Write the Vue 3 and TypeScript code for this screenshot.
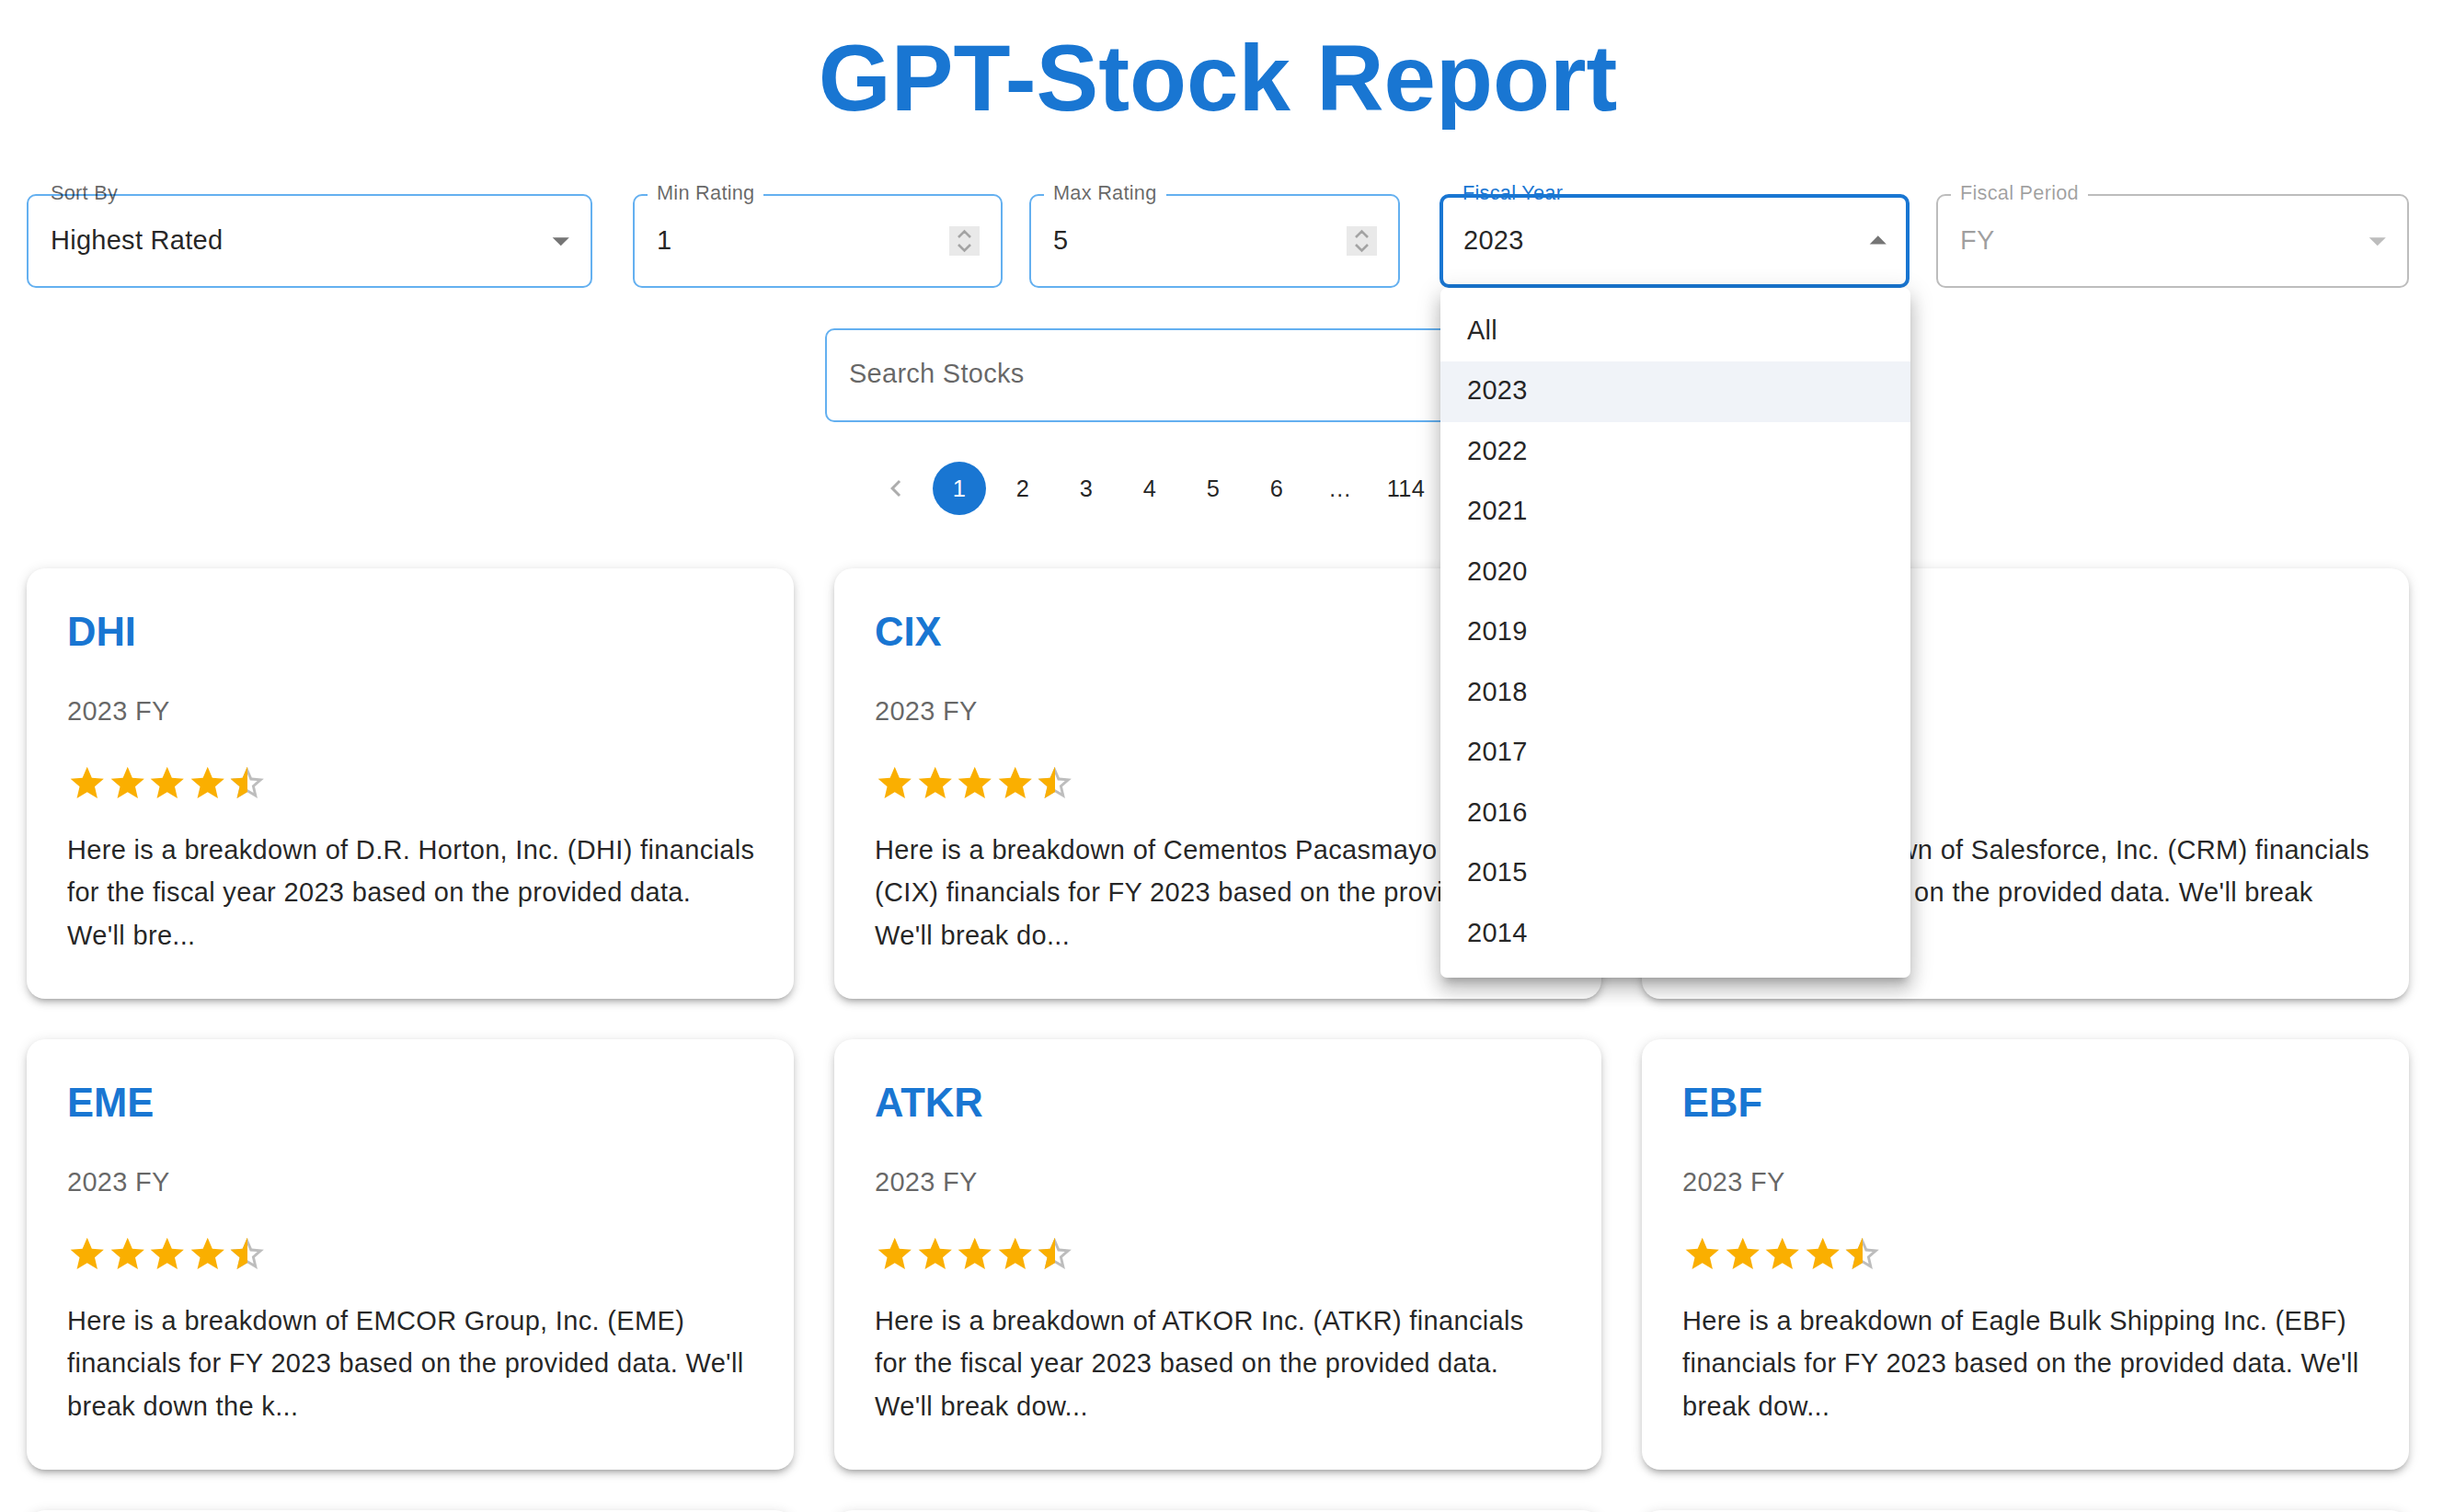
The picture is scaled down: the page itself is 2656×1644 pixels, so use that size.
<template>
  <div class="page">
    <h1 class="title">GPT-Stock Report</h1>

    <div class="filters">
      <div class="field sort">
        <label class="plain">Sort By</label>
        <span class="value">Highest Rated</span>
        <svg class="caret" viewBox="0 0 24 24"><path d="M7 10l5 5 5-5z" /></svg>
      </div>
      <div class="field rating">
        <label>Min Rating</label>
        <span class="value">1</span>
        <div class="spin">
          <svg viewBox="0 0 33 32"><path d="M10 12l6.5-6.5L23 12M10 20l6.5 6.5L23 20" /></svg>
        </div>
      </div>
      <div class="field rating max">
        <label>Max Rating</label>
        <span class="value">5</span>
        <div class="spin">
          <svg viewBox="0 0 33 32"><path d="M10 12l6.5-6.5L23 12M10 20l6.5 6.5L23 20" /></svg>
        </div>
      </div>
      <div class="field year focused">
        <label class="plain">Fiscal Year</label>
        <span class="value">2023</span>
        <svg class="caret" viewBox="0 0 24 24"><path d="M7 14l5-5 5 5z" /></svg>
        <ul class="menu">
          <li v-for="y in years" :key="y" :class="{ selected: y === '2023' }">{{ y }}</li>
        </ul>
      </div>
      <div class="field period disabled">
        <label>Fiscal Period</label>
        <span class="value">FY</span>
        <svg class="caret" viewBox="0 0 24 24"><path d="M7 10l5 5 5-5z" /></svg>
      </div>
    </div>

    <div class="search-row">
      <div class="field search">
        <span class="value placeholder">Search Stocks</span>
      </div>
    </div>

    <nav class="pagination">
      <button class="page-btn arrow" disabled>
        <svg viewBox="0 0 24 24"><path d="M15.41 7.41 14 6l-6 6 6 6 1.41-1.41L10.83 12z" /></svg>
      </button>
      <button v-for="p in pages" :key="p" class="page-btn" :class="{ active: p === '1' }">{{ p }}</button>
      <button class="page-btn arrow">
        <svg viewBox="0 0 24 24"><path d="M10 6 8.59 7.41 13.17 12l-4.58 4.59L10 18l6-6z" /></svg>
      </button>
    </nav>

    <div class="cards">
      <article v-for="c in cards" :key="c.ticker" class="card">
        <h2>{{ c.ticker }}</h2>
        <p class="period-text">2023 FY</p>
        <div class="stars">
          <svg v-for="n in 4" :key="n" viewBox="0 0 24 24"><path class="on" :d="starPath" /></svg>
          <span class="half">
            <svg viewBox="0 0 24 24"><path class="off" :d="starBorderPath" /></svg>
            <span class="half-fill"><svg viewBox="0 0 24 24"><path class="on" :d="starPath" /></svg></span>
          </span>
        </div>
        <p class="summary">{{ c.text }}</p>
      </article>
    </div>
  </div>
</template>

<script setup lang="ts">
interface StockCard {
  ticker: string
  text: string
}

const starPath = 'M12 17.27L18.18 21l-1.64-7.03L22 9.24l-7.19-.61L12 2 9.19 8.63 2 9.24l5.46 4.73L5.82 21z'
const starBorderPath = 'M22 9.24l-7.19-.62L12 2 9.19 8.63 2 9.24l5.46 4.73L5.82 21 12 17.27 18.18 21l-1.63-7.03L22 9.24zM12 15.4l-3.76 2.27 1-4.28-3.32-2.88 4.38-.38L12 6.1l1.71 4.04 4.38.38-3.32 2.88 1 4.28L12 15.4z'

const years: string[] = ['All', '2023', '2022', '2021', '2020', '2019', '2018', '2017', '2016', '2015', '2014']
const pages: string[] = ['1', '2', '3', '4', '5', '6', '…', '114']

const cards: StockCard[] = [
  { ticker: 'DHI', text: "Here is a breakdown of D.R. Horton, Inc. (DHI) financials for the fiscal year 2023 based on the provided data. We'll bre..." },
  { ticker: 'CIX', text: "Here is a breakdown of Cementos Pacasmayo S.A.A. (CIX) financials for FY 2023 based on the provided data. We'll break do..." },
  { ticker: 'CRM', text: "Here is a breakdown of Salesforce, Inc. (CRM) financials for FY 2023 based on the provided data. We'll break down..." },
  { ticker: 'EME', text: "Here is a breakdown of EMCOR Group, Inc. (EME) financials for FY 2023 based on the provided data. We'll break down the k..." },
  { ticker: 'ATKR', text: "Here is a breakdown of ATKOR Inc. (ATKR) financials for the fiscal year 2023 based on the provided data. We'll break dow..." },
  { ticker: 'EBF', text: "Here is a breakdown of Eagle Bulk Shipping Inc. (EBF) financials for FY 2023 based on the provided data. We'll break dow..." },
  { ticker: 'PHM', text: 'Here is a breakdown of PulteGroup, Inc. (PHM) financials for FY 2023.' },
  { ticker: 'NVR', text: 'Here is a breakdown of NVR, Inc. (NVR) financials for FY 2023.' },
  { ticker: 'LEN', text: 'Here is a breakdown of Lennar Corporation (LEN) financials for FY 2023.' }
]
</script>

<style scoped>
.page {
  height: 1644px;
  overflow: hidden;
  padding: 0 37px 0 29px;
  box-sizing: border-box;
  background: #fff;
  font-family: "Liberation Sans", Arial, sans-serif;
  color: rgba(0, 0, 0, 0.87);
}

.title {
  margin: 0;
  padding-top: 25px;
  height: 211px;
  box-sizing: border-box;
  text-align: center;
  font-size: 101.5px;
  line-height: 120px;
  font-weight: 700;
  color: #1976d2;
}

.filters {
  display: flex;
  gap: 29px;
}

.field {
  position: relative;
  height: 102px;
  box-sizing: border-box;
  border: 2px solid #64b0f0;
  border-radius: 10px;
  display: flex;
  align-items: center;
  padding: 0 24px;
  flex: none;
}

.sort { width: 615px; margin-right: 15px; }
.rating { width: 402px; }
.max { width: 403px; margin-right: 14px; }
.year { width: 511px; }
.period { width: 514px; }

.value {
  font-size: 29px;
  letter-spacing: 0.27px;
  margin-top: -2px;
}

.field label {
  position: absolute;
  left: 14px;
  top: -15px;
  padding: 0 10px;
  background: #fff;
  font-size: 21.75px;
  line-height: 24px;
  letter-spacing: 0.25px;
  color: rgba(0, 0, 0, 0.6);
}

.field label.plain {
  background: none;
}

.caret {
  position: absolute;
  right: 11px;
  top: 27px;
  width: 43.5px;
  height: 43.5px;
  fill: rgba(0, 0, 0, 0.54);
}

.spin {
  position: absolute;
  right: 23px;
  top: 33px;
  width: 33px;
  height: 32px;
  background: #e9e9e9;
}

.spin svg {
  display: block;
  width: 33px;
  height: 32px;
  fill: none;
  stroke: #a3a3a3;
  stroke-width: 2.6;
}

.focused {
  border: 4px solid #1976d2;
  padding: 0 22px;
}

.focused label {
  color: #1976d2;
  left: 11px;
  top: -17px;
}

.focused .caret {
  right: 9px;
  top: 25px;
}

.disabled {
  border-color: #bdbdbd;
}

.disabled label {
  color: rgba(0, 0, 0, 0.38);
}

.disabled .value {
  color: rgba(0, 0, 0, 0.38);
}

.disabled .caret {
  fill: rgba(0, 0, 0, 0.26);
}

.menu {
  position: absolute;
  z-index: 10;
  left: -3px;
  top: 98px;
  width: 511px;
  margin: 0;
  padding: 14.5px 0;
  list-style: none;
  background: #fff;
  border-radius: 7px;
  box-shadow: 0 9px 9px -5px rgba(0, 0, 0, 0.2), 0 14px 18px 2px rgba(0, 0, 0, 0.14), 0 5px 24px 4px rgba(0, 0, 0, 0.12);
}

.menu li {
  height: 65.5px;
  line-height: 63px;
  padding-left: 29px;
  font-size: 29px;
  letter-spacing: 0.27px;
}

.menu li.selected {
  background: #f0f3f8;
}

.search-row {
  display: flex;
  justify-content: center;
  margin-top: 44px;
}

.search {
  width: 854px;
  height: 102px;
}

.placeholder {
  color: rgba(0, 0, 0, 0.6);
  margin-top: -4px;
}

.pagination {
  display: flex;
  justify-content: center;
  padding-right: 74px;
  margin-top: 43px;
  height: 58px;
}

.page-btn {
  flex: none;
  min-width: 58px;
  height: 58px;
  margin: 0 5.5px;
  padding: 0 10.9px;
  border: 0;
  border-radius: 29px;
  background: none;
  font-family: inherit;
  font-size: 25.4px;
  letter-spacing: 0.3px;
  color: rgba(0, 0, 0, 0.87);
  display: flex;
  align-items: center;
  justify-content: center;
}

.page-btn.active {
  background: #1976d2;
  color: #fff;
}

.page-btn svg {
  flex: none;
  width: 36px;
  height: 36px;
  fill: rgba(0, 0, 0, 0.87);
}

.page-btn:disabled svg {
  fill: rgba(0, 0, 0, 0.32);
}

.cards {
  display: grid;
  grid-template-columns: repeat(3, 1fr);
  gap: 44px;
  margin-top: 58px;
}

.card {
  height: 468px;
  box-sizing: border-box;
  padding: 40px 42px 0 44px;
  background: #fff;
  border-radius: 20px;
  box-shadow: 0 5px 5px -4px rgba(0, 0, 0, 0.2), 0 5px 7px 0 rgba(0, 0, 0, 0.14), 0 2px 14px 0 rgba(0, 0, 0, 0.12);
}

.card h2 {
  margin: 0;
  font-size: 43.5px;
  line-height: 58px;
  font-weight: 700;
  color: #1976d2;
}

.period-text {
  margin: 37px 0 0;
  font-size: 29px;
  line-height: 40px;
  letter-spacing: 0.27px;
  color: rgba(0, 0, 0, 0.6);
}

.stars {
  display: flex;
  margin-top: 37px;
  height: 44px;
}

.stars svg {
  display: block;
  flex: none;
  width: 43.5px;
  height: 43.5px;
}

.on { fill: #faaf00; }
.off { fill: rgba(0, 0, 0, 0.26); }

.half {
  position: relative;
  width: 43.5px;
  height: 43.5px;
}

.half-fill {
  position: absolute;
  left: 0;
  top: 0;
  width: 21.75px;
  height: 43.5px;
  overflow: hidden;
}

.summary {
  margin: 27px 0 0;
  font-size: 29px;
  line-height: 46.4px;
  letter-spacing: 0.33px;
}
</style>
